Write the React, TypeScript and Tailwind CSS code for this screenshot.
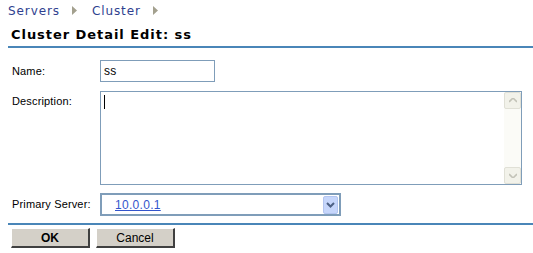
import React from "react";

function Arrow() {
  return (
    <svg width="5" height="9" viewBox="0 0 5 9">
      <path d="M0 0 L5 4.5 L0 9 Z" fill="#a3a08e" />
    </svg>
  );
}

export default function App() {
  return (
    <div className="w-[533px] h-[253px] bg-white relative font-['Liberation_Sans',sans-serif] text-[11px] text-black">
      {/* breadcrumb */}
      <div className="flex items-center h-[16px] pt-[5px] pl-[8px] font-['DejaVu_Sans',sans-serif] text-[12px] tracking-[0.9px] text-[#2f3f8f]">
        <span>Servers</span>
        <span className="ml-[12px] mr-[15px] flex"><Arrow /></span>
        <span>Cluster</span>
        <span className="ml-[12px] flex"><Arrow /></span>
      </div>

      {/* title */}
      <div className="ml-[8px] mt-[11px] border-b-2 border-[#4a86b8] pl-[3px] pb-[3px] font-['DejaVu_Sans',sans-serif] font-bold text-[13px] leading-[16px] tracking-[0.95px]">
        Cluster Detail Edit: ss
      </div>

      {/* form */}
      <div className="pl-[12px] pt-[12px] flex flex-col tracking-[0.15px]">
        <div className="flex items-center h-[22px]">
          <span className="w-[88px]">Name:</span>
          <div className="w-[115px] h-[22px] border border-[#7f9db9] flex items-center pl-[3px] text-[12px]">
            ss
          </div>
        </div>

        <div className="flex mt-[9px]">
          <span className="w-[88px] pt-[2px]">Description:</span>
          <div className="w-[422px] h-[94px] border border-[#7f9db9] flex">
            <div className="flex-1 pl-[3px] pt-[3px]">
              <div className="w-[1px] h-[14px] bg-black" />
            </div>
            <div className="w-[17px] bg-[#fbfbf7] flex flex-col justify-between">
              <div className="h-[17px] rounded-[2px] border border-[#e0e0d6] bg-[#f2f2ea] flex items-center justify-center">
                <svg width="8" height="5" viewBox="0 0 8 5">
                  <path d="M0 4 L4 0 L8 4" fill="none" stroke="#c3c3b8" strokeWidth="1.6" />
                </svg>
              </div>
              <div className="h-[17px] rounded-[2px] border border-[#e0e0d6] bg-[#f2f2ea] flex items-center justify-center">
                <svg width="8" height="5" viewBox="0 0 8 5">
                  <path d="M0 1 L4 5 L8 1" fill="none" stroke="#c3c3b8" strokeWidth="1.6" />
                </svg>
              </div>
            </div>
          </div>
        </div>

        <div className="flex items-center mt-[8px]">
          <span className="w-[88px]">Primary Server:</span>
          <div className="w-[241px] h-[23px] border-2 border-[#7f9db9] flex items-center justify-between pl-[13px] pr-[1px]">
            <span className="text-[#3355cc] underline text-[12px] tracking-[0.3px]">10.0.0.1</span>
            <div className="w-[15px] h-[18px] rounded-[2px] bg-[#c6d6fb] border border-[#b3c5f0] flex items-center justify-center">
              <svg width="9" height="6" viewBox="0 0 9 6">
                <path d="M1 1 L4.5 4.5 L8 1" fill="none" stroke="#4d6185" strokeWidth="2" />
              </svg>
            </div>
          </div>
        </div>
      </div>

      {/* bottom bar */}
      <div className="ml-[8px] mt-[7px] border-t-2 border-[#4a86b8] pt-[3px] pl-[3px] flex gap-[6px]">
        <button className="w-[79px] h-[20px] bg-[#d4d0c8] border-r-2 border-b-2 border-[#404040] border-t border-l border-t-white border-l-white font-bold text-[12px] leading-none">
          OK
        </button>
        <button className="w-[79px] h-[20px] bg-[#d4d0c8] border-r-2 border-b-2 border-[#404040] border-t border-l border-t-white border-l-white text-[12px] leading-none">
          Cancel
        </button>
      </div>
    </div>
  );
}
